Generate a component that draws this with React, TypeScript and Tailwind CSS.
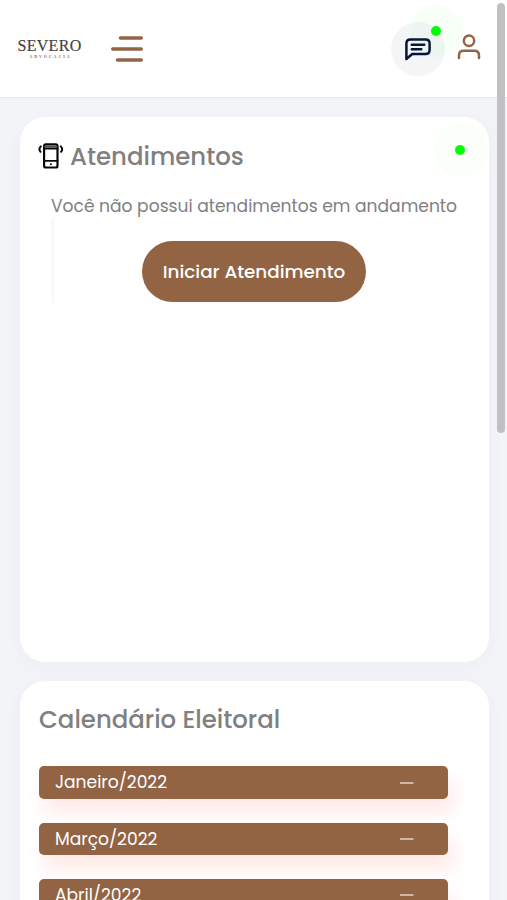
const months = ["Janeiro/2022", "Março/2022", "Abril/2022"];

function MenuIcon() {
    return (
        <svg width="32" height="28" viewBox="0 0 32 28" fill="none" stroke="#936445" strokeWidth="3.6" strokeLinecap="round">
            <path d="M9.5 3H30.2M1.8 14H30.2M6.5 25H30.2" />
        </svg>
    );
}

function ChatIcon() {
    return (
        <svg width="26" height="24" viewBox="0 0 26 24" fill="none" stroke="#07133b" strokeWidth="2.5" strokeLinecap="round" strokeLinejoin="round">
            <path d="M1.4 22V6.4Q1.4 2.4 5.4 2.4H20.6Q24.6 2.4 24.6 6.4V13Q24.6 17 20.6 17H7.2Z" />
            <path d="M6.8 7.7H19.3M6.8 12.2H16.3" />
        </svg>
    );
}

function UserIcon() {
    return (
        <svg width="24" height="26" viewBox="0 0 24 26" fill="none" stroke="#936445" strokeWidth="2.5" strokeLinecap="round">
            <circle cx="12" cy="6.8" r="5.2" />
            <path d="M2 24V21.5Q2 16.8 6.8 16.8H17.2Q22 16.8 22 21.5V24" />
        </svg>
    );
}

function PhoneIcon() {
    return (
        <svg className="-mt-px" width="26" height="26" viewBox="0 0 26 26" fill="none" stroke="#080808" strokeLinecap="round">
            <rect x="6.1" y="1.3" width="13.4" height="23.2" rx="1.8" strokeWidth="2.2" />
            <path d="M7.4 3.6H18.2" strokeWidth="2.2" stroke="#555" />
            <path d="M6 5.6H19.5M6 17.8H19.5" strokeWidth="1.7" />
            <circle cx="12.9" cy="21.2" r="1" fill="#080808" stroke="none" />
            <path d="M2.8 3.4Q.2 6 2.5 8.8M22.8 3.4Q25.4 6 23.1 8.8" strokeWidth="2" />
        </svg>
    );
}

export default function App() {
    return (
        <div className="relative h-[900px] w-[507px] overflow-hidden bg-[#f2f4f8] font-['Poppins','Inter',sans-serif] text-[#808080]">
            <header className="flex h-[98px] items-center border-b border-[#e7eaee] bg-white pl-[17px]">
                <div className="-mt-[2px] flex w-[65px] flex-col items-center font-['Liberation_Serif',serif] text-[#434347]">
                    <span className="text-[16px] leading-[17px] tracking-[0.3px] [-webkit-text-stroke:0.2px_#434347]">SEVERO</span>
                    <span className="h-[5px] pl-[2px] text-[4px] leading-[5px] font-bold tracking-[1.9px] text-[#876b60]">ADVOCACIA</span>
                </div>
                <button className="ml-[29px]" aria-label="Menu">
                    <MenuIcon />
                </button>

                <button className="relative ml-[248px] flex h-[54px] w-[54px] items-center justify-center rounded-full bg-[#f4f5f7]" aria-label="Mensagens">
                    <span className="absolute -top-[17px] left-[20px] h-[52px] w-[52px] rounded-full bg-[#00ff00]/[0.03]" />
                    <span className="absolute top-[4px] left-[40px] h-[10px] w-[10px] rounded-full bg-[#00ff00]" />
                    <ChatIcon />
                </button>
                <button className="ml-[12px] -mt-[3px]" aria-label="Perfil">
                    <UserIcon />
                </button>
            </header>

            <main className="flex flex-col gap-[19px] pt-[19px] pl-[20px]">
                <section className="relative h-[545px] w-[469px] overflow-hidden rounded-[25px] bg-white px-[18px] pt-[25px] shadow-[0_4px_20px_rgba(40,60,90,0.03)]">
                    {/* status online */}
                    <span className="absolute top-[6px] left-[414px] h-[54px] w-[54px] rounded-full bg-[#00ff00]/[0.02]" />
                    <span className="absolute top-[28px] left-[435px] h-[10px] w-[10px] rounded-full bg-[#00ff00]" />

                    <div className="flex h-[29px] items-center gap-[6px]">
                        <PhoneIcon />
                        <h2 className="pt-px text-[24.4px] font-medium whitespace-nowrap">Atendimentos</h2>
                    </div>
                    <div className="ml-[13px] w-[407px] pt-[23px]">
                        <p className="text-[17.12px] leading-[24px] whitespace-nowrap">Você não possui atendimentos em andamento</p>
                        <div className="h-[85px] border-l-[3px] border-[#f7f9fb] pt-[23px] pl-[88px]">
                            <button className="h-[61px] w-[224px] rounded-full bg-[#926444] text-[18.35px] font-medium whitespace-nowrap text-white">
                                Iniciar Atendimento
                            </button>
                        </div>
                    </div>
                </section>

                <section className="h-[500px] w-[469px] rounded-[25px] bg-white px-[19px] pt-[22px] shadow-[0_4px_20px_rgba(40,60,90,0.03)]">
                    <h2 className="text-[24.4px] leading-[34px] font-medium whitespace-nowrap">Calendário Eleitoral</h2>
                    <div className="mt-[29.4px] flex flex-col gap-[24px]">
                        {months.map((month) => (
                            <div
                                key={month}
                                className="flex h-[32.3px] w-[409px] items-center justify-between rounded-[5px] bg-[#926444] pr-[34px] pl-[16px] text-[17.1px] text-white shadow-[5px_14px_18px_rgba(255,80,60,0.12)]"
                            >
                                <span className="pt-px">{month}</span>
                                <svg width="14" height="2" viewBox="0 0 14 2">
                                    <path d="M0 1H13.5" stroke="#e2d1c6" strokeWidth="1.5" />
                                </svg>
                            </div>
                        ))}
                    </div>
                </section>
            </main>

            {/* barra de rolagem */}
            <div className="absolute top-[3px] left-[497px] h-[430px] w-[8px] rounded-full bg-[#c1c1c4]" />
        </div>
    );
}
